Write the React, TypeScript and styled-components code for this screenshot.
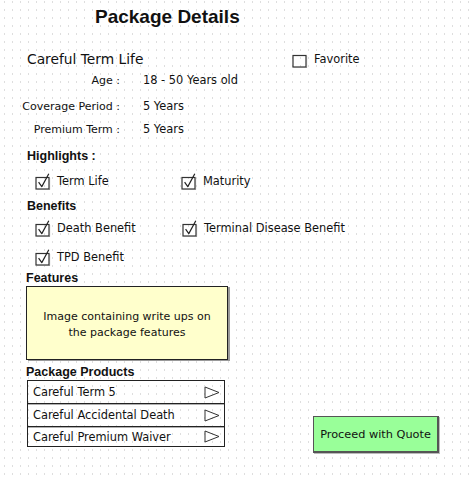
import React from "react";
import styled, { createGlobalStyle } from "styled-components";

const GlobalStyle = createGlobalStyle`
  html, body { margin: 0; padding: 0; }
  body {
    background-color: #fff;
    background-image:
      linear-gradient(to right, #fff 0 4px, transparent 4px 5px, #fff 5px 8px),
      linear-gradient(to bottom, #fff 0 1px, #dedede 1px 3px, #fff 3px 8px);
    background-size: 8px 8px;
    font-family: "DejaVu Sans", sans-serif;
    color: #111;
  }
`;

const Page = styled.div`
  width: 470px;
  height: 478px;
  box-sizing: border-box;
  padding: 5px 0 0 26px;
  display: flex;
  flex-direction: column;
  font-size: 11.4px;
`;

const Title = styled.h1`
  margin: 0 0 0 69px;
  font-family: "Liberation Sans", Arial, sans-serif;
  font-size: 19px;
  line-height: 24px;
  font-weight: bold;
`;

const NameRow = styled.div`
  margin-top: 21px;
  height: 18px;
  display: flex;
  align-items: center;
`;

const PlanName = styled.div`
  width: 265px;
  margin-left: 1px;
  font-size: 13.8px;
`;

const CheckItem = styled.label<{ $width?: number }>`
  display: flex;
  align-items: center;
  gap: 6px;
  width: ${(p) => (p.$width ? `${p.$width}px` : "auto")};
  white-space: nowrap;
`;

const InfoRow = styled.div<{ $top: number }>`
  margin-top: ${(p) => p.$top}px;
  margin-left: -10px;
  display: grid;
  grid-template-columns: 104px 1fr;
  column-gap: 23px;
  height: 18px;
  align-items: center;
  white-space: nowrap;
`;

const InfoLabel = styled.span`
  text-align: right;
  font-size: 11px;
`;

const Heading = styled.div<{ $top: number; $left?: number }>`
  margin-top: ${(p) => p.$top}px;
  margin-left: ${(p) => p.$left ?? 1}px;
  height: 16px;
  line-height: 16px;
  font-family: "Liberation Sans", Arial, sans-serif;
  font-weight: bold;
  font-size: 12.5px;
`;

const CheckRow = styled.div<{ $top: number }>`
  margin-top: ${(p) => p.$top}px;
  margin-left: 9px;
  height: 18px;
  display: flex;
  align-items: center;
`;

const FeatureBox = styled.div`
  width: 202px;
  height: 74px;
  box-sizing: border-box;
  background: #ffffcc;
  border: 1px solid #222;
  box-shadow: 2px 1px 0 #9a9a9a;
  display: flex;
  align-items: center;
  justify-content: center;
  text-align: center;
  font-size: 11px;
  line-height: 16px;
  padding-top: 3px;
`;

const BottomRow = styled.div`
  margin-top: 4px;
  display: flex;
  align-items: flex-start;
`;

const ProductsCol = styled.div`
  display: flex;
  flex-direction: column;
`;

const ProductList = styled.div`
  margin-left: 1px;
  width: 198px;
  box-sizing: border-box;
  border: 1px solid #222;
  display: flex;
  flex-direction: column;
`;

const ProductRow = styled.div<{ $h: number; $last?: boolean }>`
  height: ${(p) => p.$h}px;
  display: flex;
  align-items: center;
  justify-content: space-between;
  padding: 0 4px 0 5px;
  border-bottom: ${(p) => (p.$last ? "none" : "1px solid #222")};
  box-shadow: ${(p) => (p.$last ? "none" : "0 1px 0 #b0b0b0")};
`;

const ProceedButton = styled.button`
  margin-top: 52px;
  margin-left: 88px;
  width: 126px;
  height: 37px;
  box-sizing: border-box;
  background: #99ff99;
  border: 1px solid #555;
  border-right-width: 2px;
  border-bottom-width: 2px;
  box-shadow: 1px 1px 0 #bbb;
  font-family: inherit;
  font-size: 11.3px;
  color: #111;
  padding: 0;
`;

const CheckMark = ({ checked = true }: { checked?: boolean }) => (
  <svg width="16" height="17" viewBox="0 0 16 17">
    <rect x="1" y="4.5" width="13" height="11.5" fill="none" stroke="#333" strokeWidth="1.2" />
    <path d="M14.6 5 V16.6 H1.5" fill="none" stroke="#777" strokeWidth="0.8" />
    {checked && (
      <path d="M3.6 9.2 L6.8 13.6 L13.8 0.8" fill="none" stroke="#222" strokeWidth="1.2" strokeLinejoin="round" />
    )}
  </svg>
);

const Arrow = () => (
  <svg width="16" height="13" viewBox="0 0 16 13">
    <path d="M1 1 L15 6.5 L1 12 Z" fill="none" stroke="#333" strokeWidth="1" strokeLinejoin="round" />
  </svg>
);

export default function App() {
  return (
    <>
      <GlobalStyle />
      <Page>
        <Title>Package Details</Title>
        <NameRow>
          <PlanName>Careful Term Life</PlanName>
          <CheckItem>
            <CheckMark checked={false} />
            Favorite
          </CheckItem>
        </NameRow>
        <InfoRow $top={3}>
          <InfoLabel>Age :</InfoLabel>
          <span>18 - 50 Years old</span>
        </InfoRow>
        <InfoRow $top={8}>
          <InfoLabel>Coverage Period :</InfoLabel>
          <span>5 Years</span>
        </InfoRow>
        <InfoRow $top={5}>
          <InfoLabel>Premium Term :</InfoLabel>
          <span>5 Years</span>
        </InfoRow>

        <Heading $top={10}>Highlights :</Heading>
        <CheckRow $top={8}>
          <CheckItem $width={146}>
            <CheckMark />
            Term Life
          </CheckItem>
          <CheckItem>
            <CheckMark />
            Maturity
          </CheckItem>
        </CheckRow>

        <Heading $top={8}>Benefits</Heading>
        <CheckRow $top={5}>
          <CheckItem $width={147}>
            <CheckMark />
            Death Benefit
          </CheckItem>
          <CheckItem>
            <CheckMark />
            Terminal Disease Benefit
          </CheckItem>
        </CheckRow>
        <CheckRow $top={11}>
          <CheckItem>
            <CheckMark />
            TPD Benefit
          </CheckItem>
        </CheckRow>

        <Heading $top={4} $left={0}>Features</Heading>
        <FeatureBox>
          Image containing write ups on
          <br />
          the package features
        </FeatureBox>

        <BottomRow>
          <ProductsCol>
            <Heading $top={0} $left={0}>Package Products</Heading>
            <ProductList>
              <ProductRow $h={22}>
                Careful Term 5
                <Arrow />
              </ProductRow>
              <ProductRow $h={22}>
                Careful Accidental Death
                <Arrow />
              </ProductRow>
              <ProductRow $h={19} $last>
                Careful Premium Waiver
                <Arrow />
              </ProductRow>
            </ProductList>
          </ProductsCol>
          <ProceedButton>Proceed with Quote</ProceedButton>
        </BottomRow>
      </Page>
    </>
  );
}
